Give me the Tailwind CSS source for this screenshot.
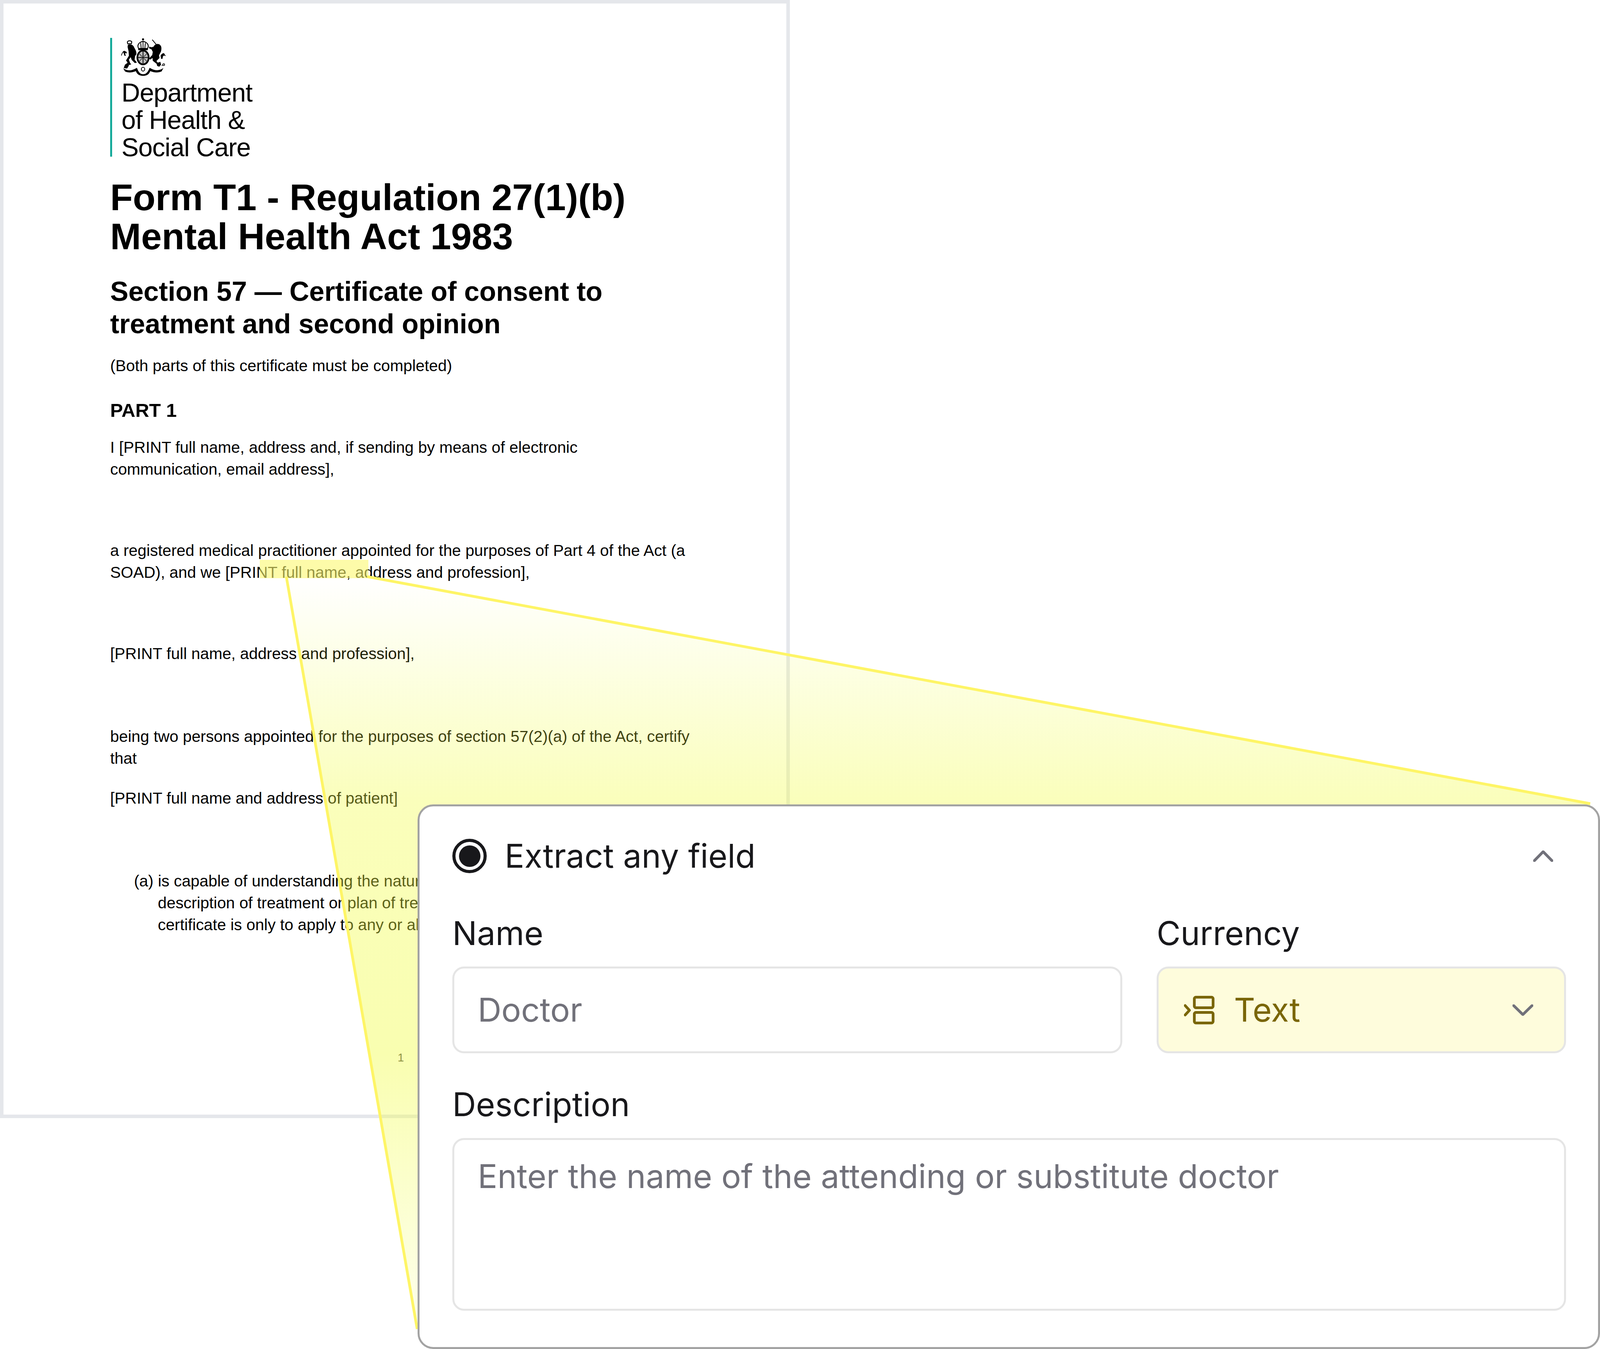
<!DOCTYPE html>
<html lang="en">
<head>
  <meta charset="UTF-8">
  <meta name="viewport" content="width=device-width, initial-scale=1.0">
  <title>Extract any field</title>
  <script src="https://cdn.jsdelivr.net/npm/@tailwindcss/browser@4"></script>
</head>
<body class="relative w-full h-screen overflow-hidden bg-white">
  <!-- Source document -->
  <div class="w-[2022px] h-[2862px] border-[9px] border-[#e5e7eb] pl-[273px] pt-[88px] text-black font-['Liberation_Sans',Arial,sans-serif] text-[40.800px] leading-[56px]">
    <div class="h-[304px] border-l-[5px] border-[#14a99a] pl-[24px]">
      <svg class="block w-[118px] h-[97px] -ml-[2px] mb-[8px]" viewBox="145 45 355 290" fill="#000">
        <circle cx="317" cy="55" r="8"/>
        <path d="M283 126C268 98 286 78 317 70C349 78 366 98 352 126Z" fill="#fff" stroke="#000" stroke-width="7"/>
        <path d="M314 72h6v52h-6zM296 84l6-2 4 42h-6zM338 84l-6-2-4 42h6z"/>
        <rect x="280" y="126" width="74" height="13" rx="3"/>
        <ellipse cx="317" cy="195" rx="50" ry="60"/>
        <ellipse cx="317" cy="195" rx="37" ry="46" fill="#bdbdbd"/>
        <path d="M314 149h6v92h-6zM280 192h74v6h-74z"/>
        <path d="M288 166l22 22M346 166l-22 22M288 224l22-22M346 224l-22-22" stroke="#333" stroke-width="5"/>
        <path d="M196 78a18 14 0 0 1 34-4l-2 14-28 2z" fill="#fff" stroke="#000" stroke-width="7"/>
        <path d="M200 98c20-10 42-2 50 22 8 14 18 30 16 50l-10 14-4 28 18 22-16 4-24-24-8-22-14 20 10 26 8 10-20 6-12-26-8-10 22-36-2-34-8-34z"/>
        <path d="M176 180c-8-24-14-32-6-32 10 0 24 4 18 14l-8-4c-6 0-2 12 2 22z" stroke="#000" stroke-width="4"/>
        <path d="M150 180c6-20 14-36 26-34" fill="none" stroke="#000" stroke-width="5"/>
        <path d="M178 250l20-14 10 22-14 22-26-4z"/>
        <path d="M388 58l30 36" stroke="#000" stroke-width="6"/>
        <path d="M398 112c10-20 34-28 50-14 14 12 12 34 6 54l-14 26 4 20-24 24 14 18-12 4-30-24-2-22-18 14-8-10 24-26 4-24-10-20-16-6-4-14 22 4z"/>
        <path d="M452 180c12-18 28-24 30-12 2 6 10 12 12 16l-14-4c-6 0-12 6-12 24l-12 2z"/>
        <path d="M420 238l30-10 6 22-14 16-16-6z"/>
        <circle cx="476" cy="250" r="7" fill="#fff" stroke="#000" stroke-width="5"/>
        <path d="M460 258l10-6" stroke="#000" stroke-width="5"/>
        <path d="M164 278c34 22 62 22 106-4 10 30 24 50 48 50s38-20 50-50c38 24 74 26 106 2l-14 26c-30 14-62 8-88-2-8 24-24 36-54 36s-48-12-56-36c-30 12-60 14-84 2z"/>
        <ellipse cx="317" cy="285" rx="13" ry="15" fill="#fff" stroke="#000" stroke-width="6"/>
      </svg>
      <div class="text-[66px] leading-[70px] tracking-[-1px]">Department<br>of Health &amp;<br>Social Care</div>
    </div>

    <h1 class="mt-[54px] font-bold text-[95px] leading-[100px]">Form T1 - Regulation 27(1)(b)<br>Mental Health Act 1983</h1>
    <h2 class="mt-[50px] font-bold text-[70px] leading-[83px]">Section 57 — Certificate of consent to<br>treatment and second opinion</h2>
    <p class="mt-[37px]">(Both parts of this certificate must be completed)</p>
    <p class="mt-[58px] font-bold text-[49px]">PART 1</p>
    <p class="mt-[39px]">I [PRINT full name, address and, if sending by means of electronic<br>communication, email address],</p>
    <p class="mt-[152px]">a registered medical practitioner appointed for the purposes of Part 4 of the Act (a<br>SOAD), and we [PRINT full name, address and profession],</p>
    <p class="mt-[152px]">[PRINT full name, address and profession],</p>
    <p class="mt-[156px]">being two persons appointed for the purposes of section 57(2)(a) of the Act, certify<br>that</p>
    <p class="mt-[46px]">[PRINT full name and address of patient]</p>
    <p class="mt-[156px] pl-[122px] indent-[-61px] w-[787px] overflow-hidden whitespace-nowrap">(a) is capable of understanding the nature<br>description of treatment or plan of treatment<br>certificate is only to apply to any or all</p>
    <p class="mt-[284px] w-[1488px] text-center text-[29px] text-[#444]">1</p>
  </div>

  <!-- Highlight and beam down to the form card -->
  <div class="absolute left-[665px] top-[1433px] w-[278px] h-[47px] bg-[#fbf870]/60"></div>
  <div class="absolute inset-0 bg-[linear-gradient(180deg,rgba(241,253,67,0)_1478px,rgba(241,253,67,0.36)_2050px,rgba(241,253,67,0.42)_2700px,rgba(241,253,67,0.1)_3402px)] [clip-path:polygon(733px_1476px,940px_1476px,calc(100%_-_25px)_2057px,calc(100%_-_25px)_2200px,1068px_3402px)]"></div>
  <svg class="absolute left-0 top-0 w-[calc(100%-25px)] h-full overflow-visible" fill="none">
    <line x1="733" y1="1476" x2="1068" y2="3402" stroke="#fef566" stroke-width="7"/>
    <line x1="940" y1="1476" x2="100%" y2="2057" stroke="#fef566" stroke-width="7"/>
  </svg>

  <!-- Field card -->
  <div class="absolute left-[1069px] right-0 top-[2059px] bottom-0 border-[5px] border-[#a3a3a3] rounded-[40px] bg-white pl-[84px] pr-[82px] pt-[83px] text-[#18181b] font-['Inter',sans-serif] text-[84px] leading-[100px]">
    <div class="flex items-center h-[88px] pr-[33px]">
      <div class="flex items-center justify-center w-[88px] h-[88px] rounded-full border-[8px] border-[#18181b]">
        <div class="w-[55px] h-[55px] rounded-full bg-[#18181b]"></div>
      </div>
      <span class="ml-[46px]">Extract any field</span>
      <svg class="ml-auto w-[51px] h-[29px]" viewBox="0 0 51 29" fill="none" stroke="#71717a" stroke-width="7" stroke-linecap="round" stroke-linejoin="round"><path d="M3 26L25.500 3L48 26"/></svg>
    </div>

    <div class="flex gap-[88px] mt-[104px]">
      <div class="flex-1 min-w-0">
        <div>Name</div>
        <div class="mt-[35px] h-[222px] flex items-center pl-[60px] border-[5px] border-[#e5e5e5] rounded-[30px] text-[#71717a]">Doctor</div>
      </div>
      <div class="w-[1048px]">
        <div>Currency</div>
        <div class="mt-[35px] h-[222px] flex items-center pl-[65px] pr-[79px] border-[5px] border-[#e5e5e5] rounded-[30px] bg-[#fefcdc] text-[#7a6608]">
          <svg class="w-[78px] h-[73px]" viewBox="0 0 78 73" fill="none" stroke="#7a6608" stroke-width="7" stroke-linecap="round" stroke-linejoin="round">
            <rect x="26.500" y="3.500" width="48" height="27" rx="4"/>
            <rect x="26.500" y="42.500" width="48" height="27" rx="4"/>
            <path d="M3 25L14 37L3 49"/>
          </svg>
          <span class="ml-[50px]">Text</span>
          <svg class="ml-auto w-[53px] h-[29px]" viewBox="0 0 53 29" fill="none" stroke="#71717a" stroke-width="7" stroke-linecap="round" stroke-linejoin="round"><path d="M3 3L26.500 26L50 3"/></svg>
        </div>
      </div>
    </div>

    <div class="mt-[81px]">Description</div>
    <div class="mt-[36px] h-[442px] pl-[60px] pt-[43px] border-[5px] border-[#e5e5e5] rounded-[30px] text-[#71717a]">Enter the name of the attending or substitute doctor</div>
  </div>
</body>
</html>
